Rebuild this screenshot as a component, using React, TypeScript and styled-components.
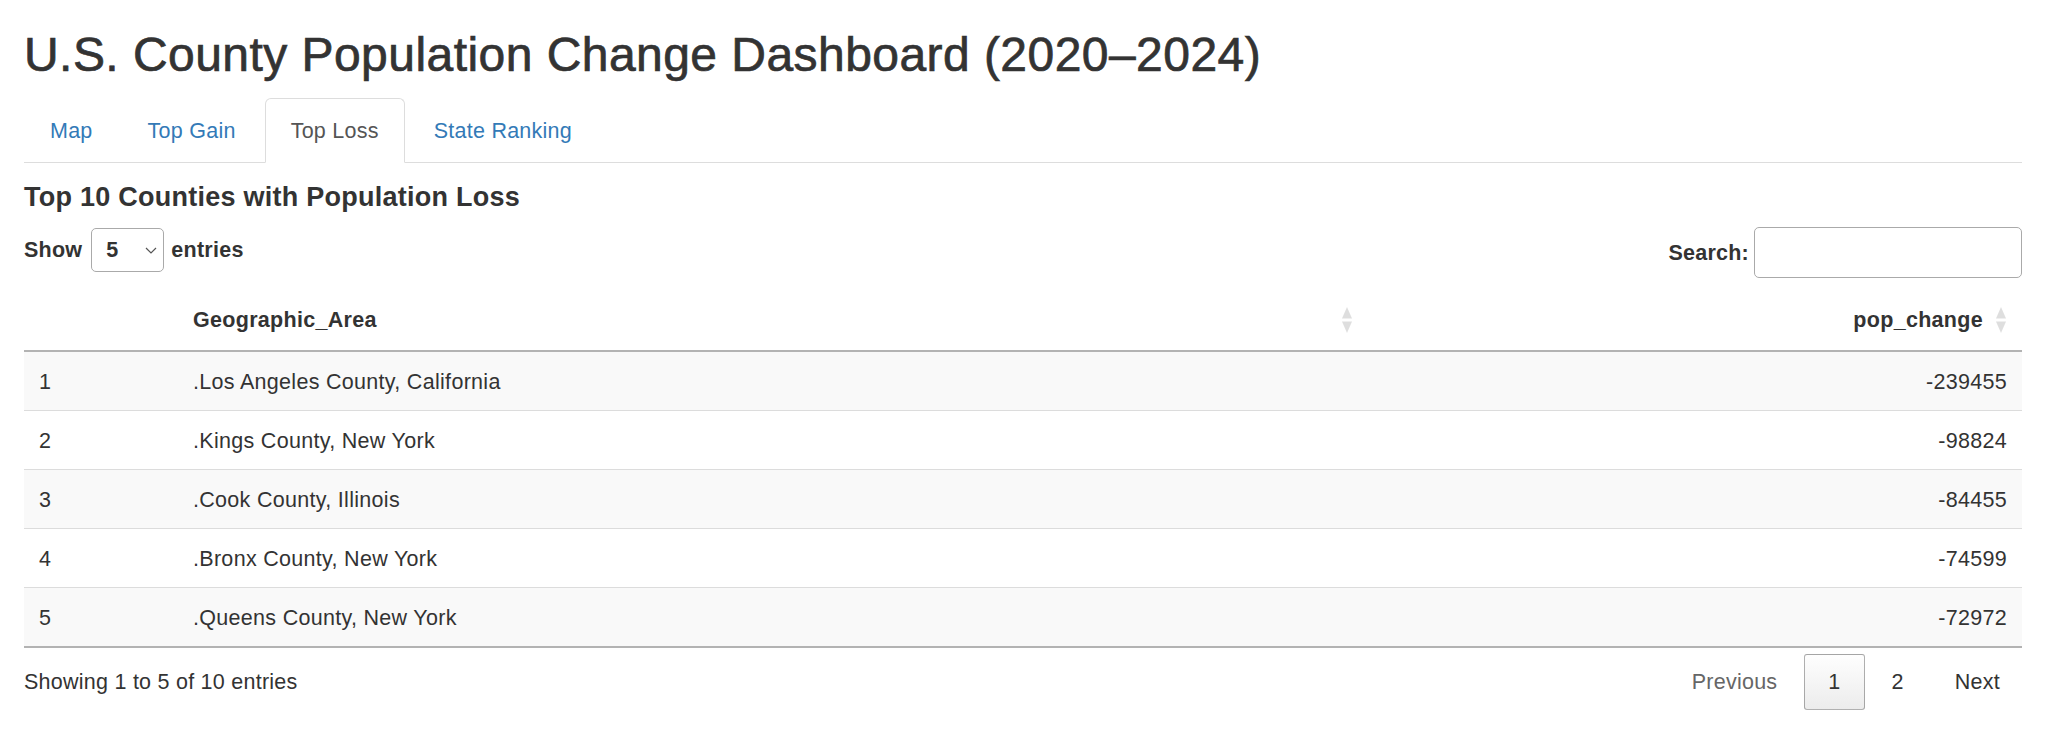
import styled, { createGlobalStyle } from "styled-components";

const GlobalStyle = createGlobalStyle`
  html, body {
    margin: 0;
    padding: 0;
    background: #fff;
  }
  body {
    font-family: "Liberation Sans", Arial, sans-serif;
    font-size: 21.5px;
    line-height: 30px;
    letter-spacing: 0.25px;
    color: #333;
  }
  * {
    box-sizing: border-box;
  }
`;

const Page = styled.div`
  padding: 29px 26px 0 24px;
`;

const Title = styled.h1`
  margin: 0 0 16px;
  font-size: 48px;
  font-weight: 500;
  line-height: 1.1;
  letter-spacing: 0.45px;
  -webkit-text-stroke: 0.7px #333;
`;

const TabBar = styled.ul`
  display: flex;
  list-style: none;
  margin: 0;
  padding: 0;
  border-bottom: 1px solid #ddd;
`;

const TabItem = styled.li<{ $active?: boolean }>`
  margin: 0 3px -1px 0;
  padding: 17px 25px 16px;
  border: 1px solid ${(p) => (p.$active ? "#ddd" : "transparent")};
  border-bottom-color: ${(p) => (p.$active ? "#fff" : "transparent")};
  border-radius: 6px 6px 0 0;
  background: ${(p) => (p.$active ? "#fff" : "transparent")};
  color: ${(p) => (p.$active ? "#555" : "#337ab7")};
  cursor: pointer;
`;

const SectionTitle = styled.h4`
  margin: 20px 0 0;
  font-size: 27px;
  font-weight: bold;
  line-height: 1.1;
`;

const Controls = styled.div`
  display: flex;
  justify-content: space-between;
  align-items: flex-start;
  margin-top: 15px;
`;

const LengthControl = styled.label`
  display: flex;
  align-items: center;
  height: 44px;
  margin-top: 1px;
  font-weight: bold;
`;

const SelectWrap = styled.div`
  position: relative;
  width: 73px;
  height: 44px;
  margin: 0 7px 0 9px;
`;

const LengthSelect = styled.select`
  appearance: none;
  width: 100%;
  height: 100%;
  padding: 0 0 0 14px;
  border: 1px solid #aaa;
  border-radius: 5px;
  background: #fff;
  font-family: inherit;
  font-size: 21.5px;
  font-weight: bold;
  color: #333;
`;

const Chevron = styled.svg`
  position: absolute;
  right: 7px;
  top: 19px;
  pointer-events: none;
`;

const SearchControl = styled.label`
  display: flex;
  align-items: center;
  height: 51px;
  font-weight: bold;
`;

const SearchInput = styled.input`
  width: 268px;
  height: 51px;
  margin-left: 5px;
  padding: 0 10px;
  border: 1px solid #aaa;
  border-radius: 5px;
  font-family: inherit;
  font-size: 21.5px;
  font-weight: normal;
`;

const Table = styled.table`
  width: 100%;
  margin-top: 12px;
  border-collapse: separate;
  border-spacing: 0;
  table-layout: fixed;
  font-size: 21.5px;
  line-height: 30px;
  letter-spacing: 0.3px;
  color: #333;
`;

const HeadCell = styled.th`
  padding: 15px;
  border-bottom: 2px solid #b3b3b3;
  font-weight: bold;
  text-align: left;
`;

const HeadInner = styled.div<{ $right?: boolean }>`
  display: flex;
  align-items: center;
  justify-content: ${(p) => (p.$right ? "flex-end" : "space-between")};
  gap: 12px;
`;

const SortArrows = styled.svg`
  flex-shrink: 0;
`;

const Row = styled.tr`
  &:nth-child(odd) td {
    background: #f9f9f9;
  }
  &:last-child td {
    border-bottom: 2px solid #b3b3b3;
  }
`;

const Cell = styled.td<{ $right?: boolean }>`
  padding: 15px 15px 13px;
  border-bottom: 1px solid #dcdcdc;
  text-align: ${(p) => (p.$right ? "right" : "left")};
`;

const Footer = styled.div`
  display: flex;
  justify-content: space-between;
  align-items: center;
  margin-top: 6px;
`;

const Info = styled.div``;

const Pagination = styled.div`
  display: flex;
  margin-right: -2px;
`;

const PageButton = styled.button<{ $current?: boolean; $disabled?: boolean }>`
  height: 56px;
  margin-left: 3px;
  padding: 0 23px;
  border: 1px solid ${(p) => (p.$current ? "rgba(0, 0, 0, 0.3)" : "transparent")};
  border-radius: 3px;
  background: ${(p) =>
    p.$current ? "linear-gradient(to bottom, #fefefe 0%, #ececec 100%)" : "transparent"};
  font-family: inherit;
  font-size: 21.5px;
  letter-spacing: 0.25px;
  color: ${(p) => (p.$disabled ? "#666" : "#333")};
  cursor: ${(p) => (p.$disabled ? "default" : "pointer")};
`;

const rows = [
  { id: 1, area: ".Los Angeles County, California", change: -239455 },
  { id: 2, area: ".Kings County, New York", change: -98824 },
  { id: 3, area: ".Cook County, Illinois", change: -84455 },
  { id: 4, area: ".Bronx County, New York", change: -74599 },
  { id: 5, area: ".Queens County, New York", change: -72972 },
];

const tabs = ["Map", "Top Gain", "Top Loss", "State Ranking"];

function SortIcon() {
  return (
    <SortArrows width="12" height="28" viewBox="0 0 12 28">
      <path d="M6 1 L11 12.5 H1 Z" fill="#000" fillOpacity="0.13" />
      <path d="M1 15.5 H11 L6 27 Z" fill="#000" fillOpacity="0.13" />
    </SortArrows>
  );
}

export default function App() {
  return (
    <>
      <GlobalStyle />
      <Page>
        <Title>U.S. County Population Change Dashboard (2020–2024)</Title>
        <TabBar>
          {tabs.map((t) => (
            <TabItem key={t} $active={t === "Top Loss"}>
              {t}
            </TabItem>
          ))}
        </TabBar>

        <SectionTitle>Top 10 Counties with Population Loss</SectionTitle>

        <Controls>
          <LengthControl>
            Show
            <SelectWrap>
              <LengthSelect defaultValue="5">
                <option value="5">5</option>
                <option value="10">10</option>
                <option value="25">25</option>
              </LengthSelect>
              <Chevron width="12" height="7" viewBox="0 0 12 7">
                <path d="M1 1 L6 6 L11 1" fill="none" stroke="#555" strokeWidth="1.2" />
              </Chevron>
            </SelectWrap>
            entries
          </LengthControl>
          <SearchControl>
            Search:
            <SearchInput type="search" />
          </SearchControl>
        </Controls>

        <Table>
          <colgroup>
            <col style={{ width: 154 }} />
            <col style={{ width: 1190 }} />
            <col />
          </colgroup>
          <thead>
            <tr>
              <HeadCell />
              <HeadCell>
                <HeadInner>
                  Geographic_Area
                  <SortIcon />
                </HeadInner>
              </HeadCell>
              <HeadCell>
                <HeadInner $right>
                  pop_change
                  <SortIcon />
                </HeadInner>
              </HeadCell>
            </tr>
          </thead>
          <tbody>
            {rows.map((r) => (
              <Row key={r.id}>
                <Cell>{r.id}</Cell>
                <Cell>{r.area}</Cell>
                <Cell $right>{r.change}</Cell>
              </Row>
            ))}
          </tbody>
        </Table>

        <Footer>
          <Info>Showing 1 to 5 of 10 entries</Info>
          <Pagination>
            <PageButton $disabled>Previous</PageButton>
            <PageButton $current>1</PageButton>
            <PageButton>2</PageButton>
            <PageButton>Next</PageButton>
          </Pagination>
        </Footer>
      </Page>
    </>
  );
}
